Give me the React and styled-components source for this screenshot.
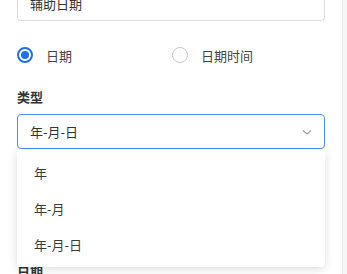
import styled, { createGlobalStyle } from "styled-components";

const GlobalStyle = createGlobalStyle`
  html, body {
    margin: 0;
    padding: 0;
    background: #ffffff;
    overflow: hidden;
  }
  body {
    font-family: "Noto Sans CJK SC", "Noto Sans", sans-serif;
    font-size: 13px;
    color: #333;
  }
`;

const Page = styled.div`
  display: flex;
  width: 347px;
  height: 274px;
  overflow: hidden;
`;

const Panel = styled.div`
  width: 343px;
  flex: none;
  border-right: 1px solid #ebebeb;
  box-sizing: border-box;
  padding: 0 17px;
`;

const Side = styled.div`
  flex: 1;
  background: #f6f6f6;
`;

const TextInput = styled.div`
  margin-top: -14px;
  height: 35px;
  box-sizing: border-box;
  border: 1px solid #dcdcdc;
  border-radius: 4px;
  padding: 0 12px;
  display: flex;
  align-items: center;
  color: #333;
  font-size: 13px;
`;

const RadioRow = styled.div`
  margin-top: 24px;
  height: 20px;
  display: grid;
  grid-template-columns: 155px 1fr;
  align-items: center;
`;

const RadioItem = styled.label`
  display: flex;
  align-items: center;
  gap: 13px;
  color: #444;
  font-size: 13px;
`;

const RadioCircle = styled.span`
  width: 16px;
  height: 16px;
  box-sizing: border-box;
  border-radius: 50%;
  border: ${(p) => (p.$checked ? "2px solid #1f6fe5" : "1px solid #c8c8c8")};
  display: flex;
  align-items: center;
  justify-content: center;
  &::after {
    content: "";
    display: ${(p) => (p.$checked ? "block" : "none")};
    width: 8px;
    height: 8px;
    border-radius: 50%;
    background: #1f6fe5;
  }
`;

const FieldLabel = styled.div`
  margin-top: ${(p) => p.$top}px;
  font-size: 13px;
  font-weight: 700;
  line-height: 18px;
  color: #333;
`;

const SelectWrap = styled.div`
  position: relative;
  margin-top: 8px;
`;

const SelectBox = styled.div`
  height: 35px;
  box-sizing: border-box;
  border: 1px solid #4a90f2;
  border-radius: 4px;
  padding: 0 12px;
  display: flex;
  align-items: center;
  justify-content: space-between;
  color: #333;
`;

const Chevron = styled.svg`
  width: 12px;
  height: 12px;
  margin-right: -1px;
`;

const Menu = styled.div`
  position: absolute;
  top: 36px;
  left: 0;
  right: 0;
  z-index: 5;
  background: #fff;
  border-radius: 4px;
  box-shadow: 0 2px 10px rgba(0, 0, 0, 0.14);
  padding: 4px 0 5px;
`;

const MenuItem = styled.div`
  height: 36px;
  display: flex;
  align-items: center;
  padding: 0 17px;
  color: #3a3a3a;
`;

const options = ["年", "年-月", "年-月-日"];

export default function App() {
  return (
    <>
      <GlobalStyle />
      <Page>
        <Panel>
          <TextInput>辅助日期</TextInput>
          <RadioRow>
            <RadioItem>
              <RadioCircle $checked />
              日期
            </RadioItem>
            <RadioItem>
              <RadioCircle />
              日期时间
            </RadioItem>
          </RadioRow>
          <FieldLabel $top={23}>类型</FieldLabel>
          <SelectWrap>
            <SelectBox>
              <span>年-月-日</span>
              <Chevron viewBox="0 0 12 12" fill="none">
                <path d="M2 4.5 L6 8 L10 4.5" stroke="#9a9a9a" strokeWidth="1.2" />
              </Chevron>
            </SelectBox>
            <Menu>
              {options.map((o) => (
                <MenuItem key={o}>{o}</MenuItem>
              ))}
            </Menu>
          </SelectWrap>
          <FieldLabel $top={114}>日期</FieldLabel>
        </Panel>
        <Side />
      </Page>
    </>
  );
}
